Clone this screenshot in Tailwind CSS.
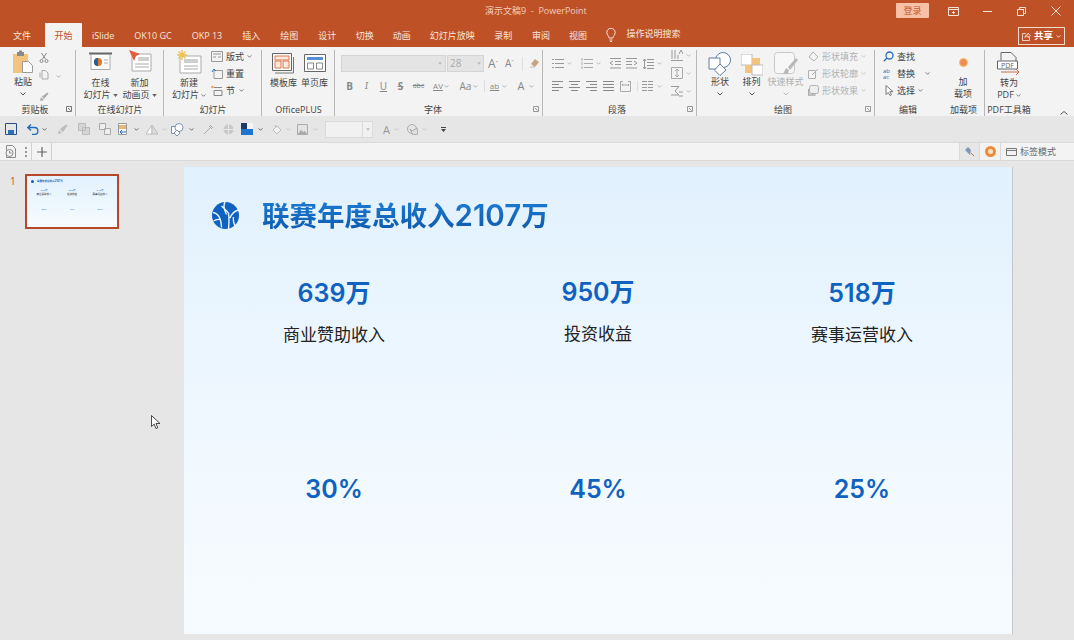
<!DOCTYPE html>
<html lang="zh-CN">
<head>
  <meta charset="UTF-8">
  <title>演示文稿9 - PowerPoint</title>
  <script src="https://cdn.jsdelivr.net/npm/@tailwindcss/browser@4"></script>
</head>
<body class="w-[1074px] h-[640px] overflow-hidden bg-[#e6e6e6] font-['Open_Sans','Noto_Sans_CJK_SC',sans-serif] text-[9px] text-[#444]">

  <!-- 标题栏 -->
  <div class="bg-[#bf5126] h-[47px] relative">
    <div class="h-[22px] flex items-center">
      <div class="pl-[485px] text-[#f3cdbd] text-[9px] leading-[26px] whitespace-nowrap flex-none w-[896px]">演示文稿9 &nbsp;-&nbsp; PowerPoint</div>
      <div class="w-[33px] h-[15px] flex-none -mt-[1px] bg-[#f8c0a6] text-[#bd5a30] rounded-[1px] flex items-center justify-center">登录</div>
      <div class="flex-none w-[145px] flex items-center text-[#f7e2d9]">
        <span class="w-[48px] flex justify-center"><svg class="w-[11px] h-[9px]" viewBox="0 0 11 9" fill="none" stroke="currentColor"><path d="M.5.5h10v8H.5zM.5 2.500h10M5.500 4v3M4 5.500h3"/></svg></span>
        <span class="w-[20px] flex justify-center"><svg class="w-[9px] h-[1px]" viewBox="0 0 9 1" stroke="currentColor"><path d="M0 .5h9"/></svg></span>
        <span class="w-[49px] flex justify-center"><svg class="w-[9px] h-[9px]" viewBox="0 0 9 9" fill="none" stroke="currentColor"><path d="M.5 2.500h6v6h-6zM2.500 2.500v-2h6v6h-2"/></svg></span>
        <span class="w-[20px] flex justify-center"><svg class="w-[10px] h-[10px]" viewBox="0 0 10 10" stroke="currentColor"><path d="M.5.5l9 9M9.500.5l-9 9"/></svg></span>
      </div>
    </div>
    <!-- 选项卡 -->
    <div class="h-[25px] flex items-end text-[#f7e6df] pl-[3px] whitespace-nowrap">
      <div class="h-[24px] leading-[26px] px-[10px] mr-[4px]">文件</div>
      <div class="h-[24px] leading-[26px] px-[9.5px] bg-[#f3f3f3] text-[#bf5126]">开始</div>
      <div class="h-[24px] leading-[26px] px-[10px]">iSlide</div>
      <div class="h-[24px] leading-[26px] px-[10px]">OK10 GC</div>
      <div class="h-[24px] leading-[26px] px-[10px]">OKP 13</div>
      <div class="h-[24px] leading-[26px] px-[10px]">插入</div>
      <div class="h-[24px] leading-[26px] px-[10px]">绘图</div>
      <div class="h-[24px] leading-[26px] px-[10px]">设计</div>
      <div class="h-[24px] leading-[26px] px-[9.5px]">切换</div>
      <div class="h-[24px] leading-[26px] px-[9.5px]">动画</div>
      <div class="h-[24px] leading-[26px] px-[9.5px]">幻灯片放映</div>
      <div class="h-[24px] leading-[26px] px-[10px]">录制</div>
      <div class="h-[24px] leading-[26px] px-[9.5px]">审阅</div>
      <div class="h-[24px] leading-[26px] px-[9.5px]">视图</div>
      <div class="h-[24px] flex items-center pl-[10px] gap-[10px]">
        <svg class="w-[10px] h-[14px]" viewBox="0 0 10 14" fill="none" stroke="currentColor"><path d="M3.200 10C3 8 .8 7 .8 4.500a4.200 4.200 0 0 1 8.400 0C9.200 7 7 8 6.800 10zM3.500 12h3M4 13.500h2"/></svg>
        <span class="leading-[26px] -mt-[2px]">操作说明搜索</span>
      </div>
    </div>
    <div class="absolute left-[1018px] top-[27px] w-[47px] h-[18px] border border-[#f3d9cd] flex items-center justify-center gap-[3px] text-white font-bold text-[9.5px]">
      <svg class="w-[9px] h-[9px]" viewBox="0 0 9 9" fill="none" stroke="currentColor" stroke-width=".7"><path d="M4 1.500H.5v7h7V5M3 5.500C3 3 5 2.500 6 2.500V1l2.500 2.500L6 5.500V4C4.500 4 3.500 4.500 3 5.500z"/></svg>
      <span>共享</span>
      <svg class="w-[5px] h-[3px]" viewBox="0 0 6 4" fill="none" stroke="currentColor"><path d="M.5.5 3 3l2.500-2.500"/></svg>
    </div>
  </div>

  <!-- 功能区 -->
  <div class="h-[69px] bg-[#f3f3f3] flex relative overflow-hidden whitespace-nowrap">

    <!-- 剪贴板 -->
    <div class="w-[76px] border-r border-[#b8b8b8] my-[3px] h-[66px] flex flex-col flex-none relative">
      <div class="h-[50px] flex">
        <div class="w-[34px] pl-[12px] flex flex-col items-center">
          <svg class="w-[22px] h-[24px] flex-none" viewBox="0 0 22 24"><path d="M1 4h15v19H1z" fill="#f2c47f"/><path d="M5 2h7v4H5z" fill="#8a8a8a"/><path d="M7 .5h3v2H7z" fill="#8a8a8a"/><path d="M10.500 11.500h6l4 4v7h-10z" fill="#fff" stroke="#9a9a9a"/></svg>
          <span class="leading-[12px] mt-[2px]">粘贴</span>
          <svg class="w-[6px] h-[4px] mt-[4px]" viewBox="0 0 6 4" fill="none" stroke="#555"><path d="M.5.500 3 3l2.500-2.500"/></svg>
        </div>
        <div class="ml-[5px] flex flex-col items-center w-[10px] gap-[7px] pt-[3px]">
          <svg class="w-[10px] h-[10px] flex-none" viewBox="0 0 10 10" fill="none" stroke="#8b8b8b"><path d="M2.500 0 6.500 6M7.500 0 3.500 6"/><circle cx="2.500" cy="8" r="1.500"/><circle cx="7.500" cy="8" r="1.500"/></svg>
          <svg class="w-[10px] h-[10px] flex-none" viewBox="0 0 10 10" fill="none" stroke="#a8a8a8"><path d="M3 2.500V.5h3.500l2.500 2.500v6H3zM1 2.500v5"/></svg>
          <svg class="w-[10px] h-[10px] flex-none mt-[5px]" viewBox="0 0 10 10"><path d="M1 9l1-4 3 3zM3 4.500 8.500.5l1 1-4.500 5.500z" fill="#aaa"/></svg>
        </div>
        <svg class="w-[5px] h-[3px] ml-[7px] mt-[25px]" viewBox="0 0 6 4" fill="none" stroke="#999"><path d="M.5.500 3 3l2.500-2.500"/></svg>
      </div>
      <div class="absolute left-0 w-[70px] text-center top-[53px] leading-[14px]">剪贴板</div>
      <svg class="absolute right-[3px] top-[56px] w-[6px] h-[6px]" viewBox="0 0 6 6" fill="none" stroke="#777"><path d="M.5.5h5v5h-5zM2 2l2.500 2.500"/></svg>
    </div>

    <!-- 在线幻灯片 -->
    <div class="w-[88px] border-r border-[#b8b8b8] my-[3px] h-[66px] flex-none relative flex pl-[5px]">
      <div class="w-[39px] flex flex-col items-center">
        <svg class="w-[23px] h-[24px] flex-none mt-[2px]" viewBox="0 0 23 24"><path d="M0 1.500h23" stroke="#666" stroke-width="2"/><path d="M2 2.500h19v15H2z" fill="#fff" stroke="#aaa"/><circle cx="9" cy="10" r="4" fill="#e0762c"/><path d="M9 6v8a4 4 0 0 1 0-8z" fill="#23609f"/><path d="M15 8h4M15 11h4" stroke="#aaa"/></svg>
        <span class="leading-[12px] mt-[1px]">在线</span>
        <span class="leading-[12px] flex items-center gap-[2px]">幻灯片<svg class="w-[5px] h-[3px]" viewBox="0 0 6 4" fill="#666"><path d="M0 0h6L3 4z"/></svg></span>
      </div>
      <div class="w-[39px] flex flex-col items-center">
        <svg class="w-[24px] h-[24px] flex-none -mt-[1px] mb-[3px]" viewBox="0 0 24 24"><path d="M4 5h19v17H4z" fill="#fff" stroke="#aaa"/><path d="M10 8h11v4H10z" fill="#cfcfcf"/><path d="M7 15h14M7 18h14" stroke="#aaa"/><path d="M1 1l11 4-4 2-2 5z" fill="#e25c3e"/></svg>
        <span class="leading-[12px] mt-[1px]">新加</span>
        <span class="leading-[12px] flex items-center gap-[2px]">动画页<svg class="w-[5px] h-[3px]" viewBox="0 0 6 4" fill="#666"><path d="M0 0h6L3 4z"/></svg></span>
      </div>
      <div class="absolute left-0 w-[88px] text-center top-[53px] leading-[14px]">在线幻灯片</div>
    </div>

    <!-- 幻灯片 -->
    <div class="w-[98px] border-r border-[#b8b8b8] my-[3px] h-[66px] flex-none relative flex pl-[7px]">
      <div class="w-[36px] flex flex-col items-center">
        <svg class="w-[25px] h-[25px] flex-none" viewBox="0 0 25 25"><path d="M3 6h21v17H3z" fill="#fff" stroke="#aaa"/><path d="M7 9h14v4H7z" fill="#cfcfcf"/><path d="M7 16h14M7 19h14" stroke="#aaa"/><path d="M5 0v10M0 5h10M1.500 1.500l7 7M8.500 1.500l-7 7" stroke="#f0c050" stroke-width="1.400"/></svg>
        <span class="leading-[12px] mt-[2px]">新建</span>
        <span class="leading-[12px] flex items-center gap-[2px]">幻灯片<svg class="w-[5px] h-[3px]" viewBox="0 0 6 4" fill="none" stroke="#555"><path d="M.5.500 3 3l2.500-2.500"/></svg></span>
      </div>
      <div class="flex flex-col pl-[4px] -mt-[2px]">
        <div class="h-[17px] flex items-center gap-[3px]"><svg class="w-[12px] h-[11px]" viewBox="0 0 12 11" fill="none" stroke="#999"><path d="M.5.500h11v10H.5zM2 3h8M2 6h3M7 6h3"/></svg>版式<svg class="w-[5px] h-[3px]" viewBox="0 0 6 4" fill="none" stroke="#555"><path d="M.5.500 3 3l2.500-2.500"/></svg></div>
        <div class="h-[17px] flex items-center gap-[3px]"><svg class="w-[12px] h-[11px]" viewBox="0 0 12 11" fill="none"><path d="M3 2.500h8.500v8H3z" stroke="#999"/><path d="M1 4l2-3 2 2" stroke="#1f6fc0"/></svg>重置</div>
        <div class="h-[17px] flex items-center gap-[3px]"><svg class="w-[12px] h-[11px]" viewBox="0 0 12 11" fill="none"><path d="M3 2.500h8M3 5.500h8v5H3z" stroke="#888"/><circle cx="1.500" cy="2" r="1.300" fill="#e8a948"/></svg>节<svg class="w-[5px] h-[3px] ml-[1px]" viewBox="0 0 6 4" fill="none" stroke="#555"><path d="M.5.500 3 3l2.500-2.500"/></svg></div>
      </div>
      <div class="absolute left-0 w-[98px] text-center top-[53px] leading-[14px]">幻灯片</div>
    </div>

    <!-- OfficePLUS -->
    <div class="w-[73px] border-r border-[#b8b8b8] my-[3px] h-[66px] flex-none relative flex pl-[6px]">
      <div class="w-[31px] flex flex-col items-center">
        <svg class="w-[23px] h-[21px] flex-none mt-[3px] mb-[3px]" viewBox="0 0 23 21" fill="none"><path d="M21.500 4v16H3" stroke="#777"/><path d="M.5.500h19v17H.5z" stroke="#666" fill="#fff"/><path d="M3 3h14v4H3zM3 8h6v7H3zM11 8h6v7h-6z" stroke="#d9784e" fill="#fbe9df"/></svg>
        <span class="leading-[12px]">模板库</span>
      </div>
      <div class="w-[31px] flex flex-col items-center">
        <svg class="w-[22px] h-[18px] flex-none mt-[4px] mb-[5px]" viewBox="0 0 22 18" fill="none"><path d="M.5.500h21v17H.5z" stroke="#666" fill="#fff"/><path d="M3 3h16v3H3z" fill="#5b8dd6"/><path d="M3.500 9h6v6h-6zM12.500 9h6v6h-6z" stroke="#888"/></svg>
        <span class="leading-[12px]">单页库</span>
      </div>
      <div class="absolute left-0 w-[73px] text-center top-[53px] leading-[14px]">OfficePLUS</div>
    </div>

    <!-- 字体 -->
    <div class="w-[208px] border-r border-[#b8b8b8] my-[3px] h-[66px] flex-none relative pl-[6px] pt-[5px]">
      <div class="flex h-[17px] items-center">
        <div class="w-[105px] h-[17px] bg-[#e4e4e4] border border-[#d4d4d4] flex justify-end items-center pr-[3px]"><svg class="w-[4px] h-[3px]" viewBox="0 0 6 4" fill="#bbb"><path d="M0 0h6L3 4z"/></svg></div>
        <div class="w-[37px] h-[17px] ml-[1px] bg-[#e4e4e4] border border-[#d4d4d4] flex justify-between items-center px-[2px] text-[#aaa] text-[10px]">28<svg class="w-[4px] h-[3px]" viewBox="0 0 6 4" fill="#bbb"><path d="M0 0h6L3 4z"/></svg></div>
        <span class="ml-[4px] text-[12px] text-[#888] w-[17px]">A<sup class="text-[6px]">ˆ</sup></span>
        <span class="text-[10px] text-[#888] w-[15px]">A<sup class="text-[6px]">ˇ</sup></span>
        <span class="ml-[2px] h-[14px] border-l border-[#ddd] pl-[6px]"><svg class="w-[11px] h-[11px]" viewBox="0 0 11 11"><path d="M2 7l4-5 4 3-4 5z" fill="#c9a37d"/><path d="M1 10h5" stroke="#bbb"/></svg></span>
      </div>
      <div class="flex h-[18px] mt-[5px] items-center text-[#888] text-[10px]">
        <b class="w-[17px] text-center ml-[0px]">B</b><i class="w-[17px] text-center font-serif">I</i><span class="w-[17px] text-center underline">U</span><b class="w-[17px] text-center line-through">S</b><span class="w-[19px] text-center text-[7px] line-through">abc</span>
        <span class="w-[26px] text-center text-[8px] underline flex items-center justify-center gap-[1px]">AV<svg class="w-[5px] h-[3px]" viewBox="0 0 6 4" fill="none" stroke="#999"><path d="M.5.500 3 3l2.500-2.500"/></svg></span>
        <span class="w-[30px] flex items-center justify-center gap-[2px]">Aa<svg class="w-[5px] h-[3px]" viewBox="0 0 6 4" fill="none" stroke="#999"><path d="M.5.500 3 3l2.500-2.500"/></svg></span>
        <span class="w-[28px] flex items-center justify-center gap-[3px] text-[8px] border-l border-[#ddd] underline">ab<svg class="w-[5px] h-[3px]" viewBox="0 0 6 4" fill="none" stroke="#999"><path d="M.5.500 3 3l2.500-2.500"/></svg></span>
        <span class="w-[28px] flex items-center justify-center gap-[5px] text-[11px]">A<svg class="w-[5px] h-[3px]" viewBox="0 0 6 4" fill="none" stroke="#999"><path d="M.5.500 3 3l2.500-2.500"/></svg></span>
      </div>
      <div class="absolute left-0 w-[196px] text-center top-[53px] leading-[14px]">字体</div>
      <svg class="absolute right-[3px] top-[56px] w-[6px] h-[6px]" viewBox="0 0 6 6" fill="none" stroke="#999"><path d="M.5.5h5v5h-5zM2 2l2.500 2.500"/></svg>
    </div>

    <!-- 段落 -->
    <div class="w-[154px] border-r border-[#b8b8b8] my-[3px] h-[66px] flex-none relative pl-[9px] flex">
      <div class="w-[119px] pt-[5px]">
        <div class="h-[17px] flex items-center">
          <span class="w-[29px] flex items-center gap-[3px]"><svg class="w-[12px] h-[11px]" viewBox="0 0 12 11" fill="none" stroke="#999"><path d="M3 1.500h9M3 5.500h9M3 9.500h9M0 1.500h2M0 5.500h2M0 9.500h2"/></svg><svg class="w-[5px] h-[3px]" viewBox="0 0 6 4" fill="none" stroke="#aaa"><path d="M.5.500 3 3l2.500-2.500"/></svg></span>
          <span class="w-[28px] flex items-center gap-[3px]"><svg class="w-[12px] h-[11px]" viewBox="0 0 12 11" fill="none" stroke="#aaa"><path d="M3 1.500h9M3 5.500h9M3 9.500h9M1 0v3M1 4v3M1 8v3"/></svg><svg class="w-[5px] h-[3px]" viewBox="0 0 6 4" fill="none" stroke="#aaa"><path d="M.5.500 3 3l2.500-2.500"/></svg></span>
          <span class="w-[17px]"><svg class="w-[12px] h-[11px]" viewBox="0 0 12 11" fill="none" stroke="#999"><path d="M1 .5h11M6 3.500h6M6 6.500h6M1 10h11M4 3 1 5l3 2"/></svg></span>
          <span class="w-[17px]"><svg class="w-[12px] h-[11px]" viewBox="0 0 12 11" fill="none" stroke="#999"><path d="M0 .5h11M0 3.500h6M0 6.500h6M0 10h11M8 3l3 2-3 2"/></svg></span>
          <span class="flex items-center gap-[3px]"><svg class="w-[11px] h-[12px]" viewBox="0 0 11 12" fill="none" stroke="#999"><path d="M4 1.500h7M4 4.500h7M4 7.500h7M4 10.500h7M1.500 1v10M0 3l1.500-2L3 3M0 9l1.500 2L3 9"/></svg><svg class="w-[5px] h-[3px]" viewBox="0 0 6 4" fill="none" stroke="#aaa"><path d="M.5.500 3 3l2.500-2.500"/></svg></span>
        </div>
        <div class="h-[18px] mt-[5px] flex items-center">
          <span class="w-[17px]"><svg class="w-[11px] h-[10px]" viewBox="0 0 11 10" stroke="#888"><path d="M0 .5h11M0 3.500h7M0 6.500h11M0 9.500h7"/></svg></span>
          <span class="w-[17px]"><svg class="w-[11px] h-[10px]" viewBox="0 0 11 10" stroke="#888"><path d="M0 .5h11M2 3.500h7M0 6.500h11M2 9.500h7"/></svg></span>
          <span class="w-[17px]"><svg class="w-[11px] h-[10px]" viewBox="0 0 11 10" stroke="#888"><path d="M0 .5h11M4 3.500h7M0 6.500h11M4 9.500h7"/></svg></span>
          <span class="w-[17px]"><svg class="w-[11px] h-[10px]" viewBox="0 0 11 10" stroke="#888"><path d="M0 .5h11M0 3.500h11M0 6.500h11M0 9.500h11"/></svg></span>
          <span class="w-[17px]"><svg class="w-[11px] h-[11px]" viewBox="0 0 11 11" fill="none" stroke="#aaa"><path d="M.5.500v10h10V.5M0 .5h3M8 .5h3M2 4h7M3 3 2 4l1 1M8 3l1 1-1 1"/></svg></span>
          <span class="border-l border-[#ddd] pl-[4px] flex items-center gap-[4px]"><svg class="w-[11px] h-[10px]" viewBox="0 0 11 10" stroke="#999"><path d="M0 .5h5M6 .5h5M0 3.500h5M6 3.500h5M0 6.500h5M6 6.500h5M0 9.500h5M6 9.500h5"/></svg><svg class="w-[5px] h-[3px]" viewBox="0 0 6 4" fill="none" stroke="#aaa"><path d="M.5.500 3 3l2.500-2.500"/></svg></span>
        </div>
      </div>
      <div class="flex flex-col -mt-[1px] gap-[6px]">
        <span class="flex items-center gap-[3px] h-[12px]"><svg class="w-[12px] h-[12px]" viewBox="0 0 12 12" fill="none" stroke="#999"><path d="M1 1v9M4 1v9M7 6v4M0 11.500h12M8 5l2-4 2 4"/></svg><svg class="w-[5px] h-[3px]" viewBox="0 0 6 4" fill="none" stroke="#aaa"><path d="M.5.500 3 3l2.500-2.500"/></svg></span>
        <span class="flex items-center gap-[3px] h-[12px]"><svg class="w-[12px] h-[12px]" viewBox="0 0 12 12" fill="none" stroke="#aaa"><path d="M.5.500h11v11H.5zM6 2v8M4 4l2-2 2 2M4 8l2 2 2-2"/></svg><svg class="w-[5px] h-[3px]" viewBox="0 0 6 4" fill="none" stroke="#aaa"><path d="M.5.500 3 3l2.500-2.500"/></svg></span>
        <span class="flex items-center gap-[3px] h-[12px]"><svg class="w-[12px] h-[11px]" viewBox="0 0 12 11" fill="none" stroke="#999"><path d="M0 .5h8L4 5l4 4H0M8 6h4M8 10h4"/></svg><svg class="w-[5px] h-[3px]" viewBox="0 0 6 4" fill="none" stroke="#aaa"><path d="M.5.500 3 3l2.500-2.500"/></svg></span>
      </div>
      <div class="absolute left-0 w-[148px] text-center top-[53px] leading-[14px]">段落</div>
      <svg class="absolute right-[3px] top-[56px] w-[6px] h-[6px]" viewBox="0 0 6 6" fill="none" stroke="#999"><path d="M.5.5h5v5h-5zM2 2l2.500 2.500"/></svg>
    </div>

    <!-- 绘图 -->
    <div class="w-[178px] border-r border-[#b8b8b8] my-[3px] h-[66px] flex-none relative flex pl-[7px]">
      <div class="w-[32px] flex flex-col items-center">
        <svg class="w-[24px] h-[24px] flex-none mt-[2px]" viewBox="0 0 24 24" fill="#fff" stroke="#5f7f9f"><circle cx="15" cy="8" r="7.500"/><path d="M1 6h11v11H1z"/><path d="M12 12l6 6-6 5.500L6.500 18z"/></svg>
        <span class="leading-[12px]">形状</span>
        <svg class="w-[6px] h-[4px] mt-[4px]" viewBox="0 0 6 4" fill="none" stroke="#555"><path d="M.5.500 3 3l2.500-2.500"/></svg>
      </div>
      <div class="w-[31px] flex flex-col items-center">
        <svg class="w-[22px] h-[22px] flex-none mt-[4px]" viewBox="0 0 22 22"><path d="M0 0h11v11H0z" fill="#fff" stroke="#bbb"/><path d="M11 4h8v7h-8zM4 11h7v8H4z" fill="#f2c47f"/><path d="M11 11h11v10H11z" fill="#fff" stroke="#bbb"/></svg>
        <span class="leading-[12px]">排列</span>
        <svg class="w-[6px] h-[4px] mt-[4px]" viewBox="0 0 6 4" fill="none" stroke="#555"><path d="M.5.500 3 3l2.500-2.500"/></svg>
      </div>
      <div class="w-[37px] flex flex-col items-center text-[#b0b0b0]">
        <svg class="w-[24px] h-[24px] flex-none mt-[2px]" viewBox="0 0 24 24"><rect x=".5" y=".5" width="20" height="21" rx="3" fill="#f7f7f7" stroke="#c8c8c8"/><path d="M9 22l3-6 3 2-1 4zM14 15l8-9 2 2-8 10z" fill="#b9b9b9"/></svg>
        <span class="leading-[12px]">快速样式</span>
        <svg class="w-[6px] h-[4px] mt-[4px]" viewBox="0 0 6 4" fill="none" stroke="#bbb"><path d="M.5.500 3 3l2.500-2.500"/></svg>
      </div>
      <div class="flex flex-col -mt-[2px] pl-[4px] text-[#b0b0b0]">
        <div class="h-[17px] flex items-center gap-[3px]"><svg class="w-[11px] h-[11px]" viewBox="0 0 11 11" fill="none" stroke="#b0b0b0"><path d="M1 6l4-5 5 5-4 4z"/></svg>形状填充<svg class="w-[5px] h-[3px]" viewBox="0 0 6 4" fill="none" stroke="#bbb"><path d="M.5.500 3 3l2.500-2.500"/></svg></div>
        <div class="h-[17px] flex items-center gap-[3px]"><svg class="w-[11px] h-[11px]" viewBox="0 0 11 11" fill="none" stroke="#b0b0b0"><path d="M.5 2.500h7v8h-7zM4 7l6-6"/></svg>形状轮廓<svg class="w-[5px] h-[3px]" viewBox="0 0 6 4" fill="none" stroke="#bbb"><path d="M.5.500 3 3l2.500-2.500"/></svg></div>
        <div class="h-[17px] flex items-center gap-[3px]"><svg class="w-[11px] h-[11px]" viewBox="0 0 11 11"><rect x="1.500" y=".5" width="9" height="8" rx="2" fill="#eee" stroke="#b0b0b0"/><path d="M.5 4v6h7" fill="none" stroke="#aaa" stroke-width="1.500"/></svg>形状效果<svg class="w-[5px] h-[3px]" viewBox="0 0 6 4" fill="none" stroke="#bbb"><path d="M.5.500 3 3l2.500-2.500"/></svg></div>
      </div>
      <div class="absolute left-0 w-[172px] text-center top-[53px] leading-[14px]">绘图</div>
      <svg class="absolute right-[3px] top-[56px] w-[6px] h-[6px]" viewBox="0 0 6 6" fill="none" stroke="#999"><path d="M.5.5h5v5h-5zM2 2l2.500 2.500"/></svg>
    </div>

    <!-- 编辑 -->
    <div class="w-[67px] my-[3px] h-[66px] flex-none relative pl-[8px]">
      <div class="flex flex-col -mt-[2px]">
        <div class="h-[17px] flex items-center gap-[3px]"><svg class="w-[11px] h-[11px]" viewBox="0 0 11 11" fill="none" stroke="#2c6db5" stroke-width="1.300"><circle cx="6.500" cy="4.500" r="3.500"/><path d="M4 7 .8 10.200"/></svg>查找</div>
        <div class="h-[17px] flex items-center gap-[3px]"><span class="w-[11px] text-[6px] leading-[6px] text-[#2c6db5]">ab<br>ac</span>替换<svg class="w-[5px] h-[3px] ml-[7px]" viewBox="0 0 6 4" fill="none" stroke="#555"><path d="M.5.500 3 3l2.500-2.500"/></svg></div>
        <div class="h-[17px] flex items-center gap-[3px]"><svg class="w-[11px] h-[11px]" viewBox="0 0 11 11" fill="#fff" stroke="#777"><path d="M3 .5v9l2.300-2 1.700 3 1.500-.8-1.700-3H10z"/></svg>选择<svg class="w-[5px] h-[3px]" viewBox="0 0 6 4" fill="none" stroke="#555"><path d="M.5.500 3 3l2.500-2.500"/></svg></div>
      </div>
      <div class="absolute left-0 w-[66px] text-center top-[53px] leading-[14px]">编辑</div>
    </div>

    <!-- 加载项 -->
    <div class="w-[43px] border-r border-[#b8b8b8] my-[3px] h-[66px] flex-none relative flex flex-col items-center">
      <div class="w-[9px] h-[9px] rounded-full bg-[#ef8a54] border border-[#f6c26b] mt-[8px] mb-[9px]"></div>
      <span class="leading-[12px]">加</span>
      <span class="leading-[12px]">载项</span>
      <div class="absolute left-0 w-[43px] text-center top-[53px] leading-[14px]">加载项</div>
    </div>

    <!-- PDF工具箱 -->
    <div class="w-[48px] my-[3px] h-[66px] flex-none relative flex flex-col items-center">
      <svg class="w-[24px] h-[23px] mt-[2px] mb-[2px] flex-none" viewBox="0 0 24 23" fill="none"><path d="M4 .5h10l5 5v6M4 .5v8" stroke="#666"/><path d="M.5 9h20v8H.5z" fill="#fff" stroke="#666"/><text x="4" y="15.500" font-size="7" fill="#666" font-family="Open Sans">PDF</text><path d="M4 20h18M19 17l3 3-3 3" stroke="#c5714f"/></svg>
      <span class="leading-[12px]">转为</span>
      <span class="leading-[12px] flex items-center gap-[2px]">PDF<svg class="w-[5px] h-[3px]" viewBox="0 0 6 4" fill="none" stroke="#555"><path d="M.5.500 3 3l2.500-2.500"/></svg></span>
      <div class="absolute left-0 w-[48px] text-center top-[53px] leading-[14px]">PDF工具箱</div>
    </div>
    <svg class="absolute left-[1060px] top-[64px] w-[8px] h-[4px]" viewBox="0 0 8 4" fill="none" stroke="#555"><path d="M.5 3.500 4 .5l3.500 3"/></svg>
  </div>

  <!-- 快速访问工具栏 -->
  <div class="h-[26px] bg-[#e6e6e6] flex items-center pl-[5px] text-[#aaa]">
    <svg class="w-[12px] h-[12px] mr-[10px]" viewBox="0 0 12 12" fill="none"><path d="M.5.5h11v11H.5z" stroke="#2b4c7e"/><path d="M3 7h6v4.500H3z" fill="#2b6fb8"/></svg>
    <svg class="w-[12px] h-[11px]" viewBox="0 0 12 11" fill="none" stroke="#1e6bb8" stroke-width="1.300"><path d="M4 .5.800 3.500 4 6.500M1 3.500h6.500a3.300 3.300 0 0 1 0 6.800H5"/></svg>
    <svg class="w-[5px] h-[3px] ml-[3px] mr-[10px]" viewBox="0 0 6 4" fill="none" stroke="#444"><path d="M.5.500 3 3l2.500-2.500"/></svg>
    <svg class="w-[11px] h-[11px] mr-[10px]" viewBox="0 0 11 11"><path d="M1 10l1-4 3 3zM3 5 9 .5l1.500 1L6 8z" fill="#bbb"/></svg>
    <svg class="w-[12px] h-[12px] mr-[9px]" viewBox="0 0 12 12" fill="#d6d6d6" stroke="#bbb"><path d="M.5.5h7v7h-7zM4.500 4.500h7v7h-7z"/></svg>
    <svg class="w-[12px] h-[12px] mr-[7px]" viewBox="0 0 12 12" fill="#eee" stroke="#aaa"><path d="M.5.5h6v6h-6zM5.500 5.500h6v6h-6z"/></svg>
    <svg class="w-[11px] h-[12px]" viewBox="0 0 11 12"><path d="M.5.500h8v11h-8z" fill="#fff" stroke="#999"/><path d="M1 2h7v4H1z" fill="#eab676"/><path d="M2 9h6M4 7 2 9l2 2" fill="none" stroke="#1e6bb8"/></svg>
    <svg class="w-[5px] h-[3px] ml-[5px] mr-[7px]" viewBox="0 0 6 4" fill="none" stroke="#444"><path d="M.5.500 3 3l2.500-2.500"/></svg>
    <svg class="w-[12px] h-[11px]" viewBox="0 0 12 11"><path d="M0 10 6 1v9z" fill="#fff" stroke="#bbb"/><path d="M6 1l6 9H6z" fill="#ddd" stroke="#bbb"/></svg>
    <svg class="w-[5px] h-[3px] ml-[4px] mr-[4px]" viewBox="0 0 6 4" fill="none" stroke="#bbb"><path d="M.5.500 3 3l2.500-2.500"/></svg>
    <svg class="w-[13px] h-[13px]" viewBox="0 0 13 13" fill="#fff" stroke="#7d93ad"><path d="M.5 3.500h7v7h-7z"/><circle cx="8" cy="4.500" r="4"/><path d="M6 7l3 3-3 3-3-3z"/></svg>
    <svg class="w-[5px] h-[3px] ml-[5px] mr-[9px]" viewBox="0 0 6 4" fill="none" stroke="#444"><path d="M.5.500 3 3l2.500-2.500"/></svg>
    <svg class="w-[11px] h-[11px] mr-[9px]" viewBox="0 0 11 11" fill="none" stroke="#aaa"><path d="M1 10l6-6M6 2l3 3M7 1l3 3"/></svg>
    <svg class="w-[11px] h-[11px] mr-[4px]" viewBox="0 0 11 11"><circle cx="5.500" cy="5.500" r="5" fill="#c8c8c8"/><path d="M5.500 0v11M0 5.500h11" stroke="#e8e8e8"/></svg>
    <div class="w-[12px] h-[12px] flex flex-col flex-none ml-[3px]"><div class="h-[6px] flex"><div class="w-[6px] bg-[#1d3a6b]"></div><div class="w-[6px] bg-[#f4f4f4]"></div></div><div class="h-[6px] bg-[#1f74d0]"></div></div>
    <svg class="w-[5px] h-[3px] ml-[5px] mr-[9px]" viewBox="0 0 6 4" fill="none" stroke="#444"><path d="M.5.500 3 3l2.500-2.500"/></svg>
    <svg class="w-[10px] h-[11px]" viewBox="0 0 10 11" fill="#f3f3f3" stroke="#bbb"><path d="M1 6l4-4 4 4-4 4zM3 3l1-2"/></svg>
    <svg class="w-[5px] h-[3px] ml-[4px] mr-[6px]" viewBox="0 0 6 4" fill="none" stroke="#bbb"><path d="M.5.500 3 3l2.500-2.500"/></svg>
    <svg class="w-[11px] h-[11px]" viewBox="0 0 11 11"><path d="M.5.500h10v10H.5z" fill="#e3e3e3" stroke="#aaa"/><path d="M1 10l3-4 2 2 2-1 2 3z" fill="#aaa"/></svg>
    <svg class="w-[5px] h-[3px] ml-[5px] mr-[7px]" viewBox="0 0 6 4" fill="none" stroke="#bbb"><path d="M.5.500 3 3l2.500-2.500"/></svg>
    <div class="w-[48px] h-[17px] bg-[#f1f1f1] border border-[#dadada] flex justify-end flex-none"><span class="w-[10px] border-l border-[#dadada] flex items-center justify-center"><svg class="w-[4px] h-[3px]" viewBox="0 0 6 4" fill="#bbb"><path d="M0 0h6L3 4z"/></svg></span></div>
    <span class="ml-[10px] text-[11px] text-[#999] leading-none">A</span>
    <svg class="w-[5px] h-[3px] ml-[4px] mr-[8px]" viewBox="0 0 6 4" fill="none" stroke="#bbb"><path d="M.5.500 3 3l2.500-2.500"/></svg>
    <svg class="w-[11px] h-[11px]" viewBox="0 0 11 11" fill="none" stroke="#aaa"><circle cx="5" cy="5" r="4.500"/><path d="M3 5l2 2 5-3 1 6-5 1z" fill="#e0e0e0"/></svg>
    <svg class="w-[5px] h-[3px] ml-[4px] mr-[14px]" viewBox="0 0 6 4" fill="none" stroke="#bbb"><path d="M.5.500 3 3l2.500-2.500"/></svg>
    <svg class="w-[5px] h-[5px]" viewBox="0 0 5 5" fill="#444"><path d="M0 0h5v1H0zM0 2h5L2.500 5z"/></svg>
  </div>

  <!-- 标签栏 -->
  <div class="h-[19px] bg-[#f3f3f3] border-t border-b border-[#d9d9d9] flex items-center">
    <div class="w-[21px] h-full flex items-center justify-center"><svg class="w-[12px] h-[13px]" viewBox="0 0 12 13" fill="#f3f3f3" stroke="#8c8c8c"><path d="M1.500.5h6l3 3v9h-9z"/><circle cx="4.500" cy="8" r="3.500"/><path d="M4.500 6v2h2" fill="none"/></svg></div>
    <div class="w-[11px] h-full border-r border-[#d0d0d0] flex flex-col items-center justify-center gap-[2px]"><i class="w-[2px] h-[2px] bg-[#999]"></i><i class="w-[2px] h-[2px] bg-[#999]"></i><i class="w-[2px] h-[2px] bg-[#999]"></i></div>
    <div class="w-[20px] h-full border-r border-[#d0d0d0] flex items-center justify-center"><svg class="w-[10px] h-[10px]" viewBox="0 0 10 10" stroke="#666" stroke-width="1.200"><path d="M5 0v10M0 5h10"/></svg></div>
    <div class="ml-[907px] w-[21px] h-full bg-[#e6e6e6] border-x border-[#d9d9d9] flex items-center justify-center"><svg class="w-[11px] h-[11px]" viewBox="0 0 11 11"><path d="M4 1l3 3-1 5-5-5z" fill="#8296b5"/><path d="M7 7l3 3" stroke="#c2703f"/></svg></div>
    <div class="w-[20px] h-full flex items-center justify-center"><div class="w-[11px] h-[11px] rounded-full border-[3px] border-[#ee8b34] bg-[#f9e3c8]"></div></div>
    <div class="border-l border-[#d9d9d9] h-full pl-[5px] flex items-center gap-[3px] text-[#666]">
      <svg class="w-[11px] h-[8px]" viewBox="0 0 11 8" fill="none" stroke="#777"><path d="M.5.500h10v7H.5zM.5 2.500h10"/></svg>标签模式
    </div>
  </div>

  <!-- 编辑区 -->
  <div class="h-[479px] flex relative">
    <div class="w-[132px] flex-none bg-[#e6e6e6] pl-[10px] pt-[13px] flex items-start">
      <span class="text-[#c25a33] text-[10px] leading-[14px] w-[15px]">1</span>
      <div class="w-[94px] h-[55px] border-2 border-[#b7472a] bg-linear-to-b from-[#e2f2fe] to-[#f6fbff] text-[#0f5fb8] flex-none">
        <div class="flex items-center pt-[4px] pl-[4px] gap-[3px]"><i class="w-[3px] h-[3px] rounded-full bg-[#0f62c0]"></i><span class="text-[2.500px] font-bold leading-[3px]">联赛年度总收入2107万</span></div>
        <div class="grid grid-cols-3 mt-[5px] px-[3px] text-center text-[2.500px] leading-[4px]">
          <div>639万<div class="text-[#333]">商业赞助收入</div></div><div>950万<div class="text-[#333]">投资收益</div></div><div>518万<div class="text-[#333]">赛事运营收入</div></div>
        </div>
        <div class="grid grid-cols-3 mt-[11px] px-[3px] text-center text-[2.500px] leading-[4px]"><div>30%</div><div>45%</div><div>25%</div></div>
      </div>
    </div>

    <div class="flex-none pl-[52px] pt-[6px]">
      <div class="w-[829px] h-[467px] border-r border-[#c4c8cc] bg-linear-to-b from-[#e1f1fd] via-[#f0f8ff] via-55% to-[#f6fbff] px-[18px] pt-[29px] font-['Inter','Noto_Sans_CJK_SC',sans-serif]">
        <div class="flex items-center h-[38px] pl-[10px]">
          <svg class="w-[27px] h-[27px] flex-none" viewBox="0 0 27 27" fill="none">
            <circle cx="13.500" cy="13.500" r="13.500" fill="#0f62c0"/>
            <path d="M1 10.500c4 .5 8 3 8.500 15M1.500 19c2-1.500 4-2 6.500-1.500M13 0c-2 4-1 8 1.500 12.500M9.500 4c3 3 6 5 7.500 8M16.500 27c.5-5 1-10 0-15M26 8c-3 1-6 3-8 8M23 24c-1.500-3-2-6-1.500-9" stroke="#e8f4fe" stroke-width="1.400"/>
          </svg>
          <h1 class="ml-[23px] text-[27.500px] font-bold leading-[38px] bg-linear-to-b from-[#1f80d8] to-[#0b55a8] bg-clip-text text-transparent whitespace-nowrap">联赛年度总收入<span class="font-semibold text-[29.500px]">2107</span>万</h1>
        </div>
        <div class="grid grid-cols-3 text-center mt-[40px]">
          <div><div class="text-[25px] font-semibold leading-[38px] text-[#0f62c0]">639万</div><div class="text-[17px] leading-[26px] mt-[10px] text-[#222]">商业赞助收入</div></div>
          <div class="-mt-px"><div class="text-[25px] font-semibold leading-[38px] text-[#0f62c0]">950万</div><div class="text-[17px] leading-[26px] mt-[10px] text-[#222]">投资收益</div></div>
          <div><div class="text-[25px] font-semibold leading-[38px] text-[#0f62c0]">518万</div><div class="text-[17px] leading-[26px] mt-[10px] text-[#222]">赛事运营收入</div></div>
        </div>
        <div class="grid grid-cols-3 text-center mt-[122px]">
          <div class="text-[25px] font-semibold leading-[38px] text-[#0f62c0]">30%</div>
          <div class="text-[25px] font-semibold leading-[38px] text-[#0f62c0]">45%</div>
          <div class="text-[25px] font-semibold leading-[38px] text-[#0f62c0]">25%</div>
        </div>
      </div>
    </div>

    <!-- 鼠标指针 -->
    <svg class="absolute left-[151px] top-[254px] w-[10px] h-[15px]" viewBox="0 0 10 15" fill="#fff" stroke="#222" stroke-width=".8"><path d="M.5.500v11l2.700-2.400 1.800 4.400 1.800-.8-1.800-4.200H9z"/></svg>
  </div>
</body>
</html>
